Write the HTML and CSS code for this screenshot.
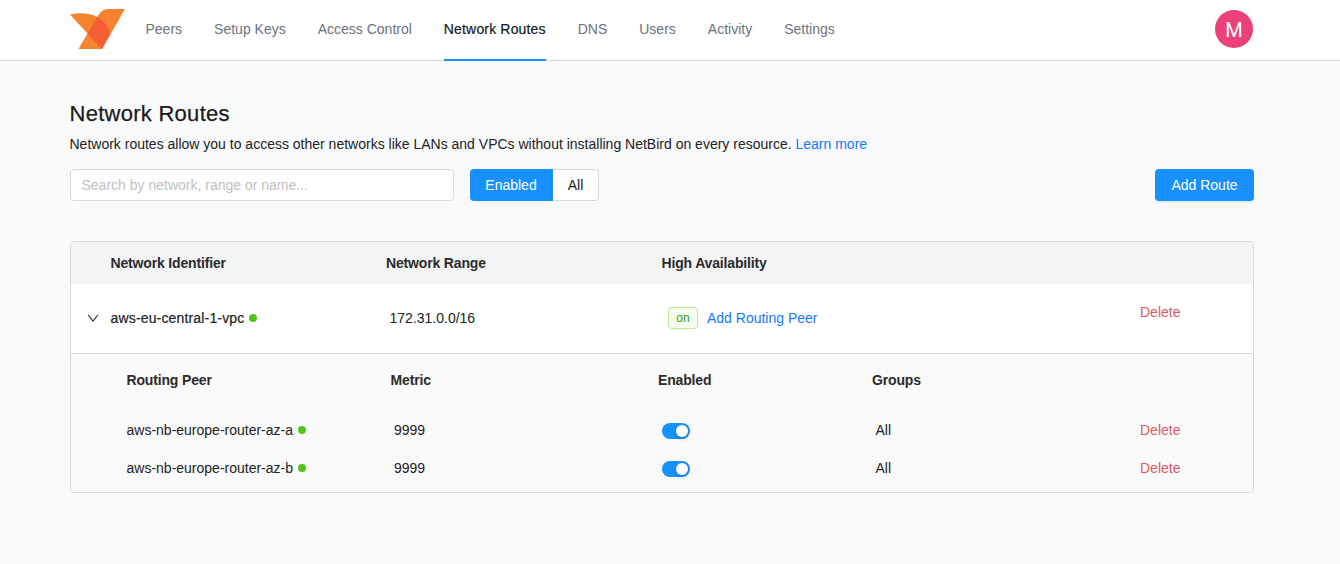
FILE: index.html
```html
<!DOCTYPE html>
<html lang="en">
<head>
<meta charset="utf-8">
<title>Network Routes</title>
<link rel="stylesheet" href="styles.css">
</head>
<body>
<header class="topbar">
  <svg class="logo" viewBox="0 0 55 40" width="55" height="40" aria-label="NetBird">
    <path fill="#f68330" d="M0 5.600C10 3.200 20 4 27.300 8C31 1.600 34 0 40 0H55L32 40H8.500L17.500 24.500Z"/>
    <path fill="#f35e32" d="M27.300 8C34 11 38.500 17.500 40 25.500L32 40L17.500 24.500Z"/>
  </svg>
  <nav class="menu">
    <a>Peers</a><a>Setup Keys</a><a>Access Control</a><a class="active medium">Network Routes</a><a>DNS</a><a>Users</a><a>Activity</a><a>Settings</a>
  </nav>
  <div class="avatar">M</div>
</header>
<main class="page">
  <h1>Network Routes</h1>
  <p class="intro">Network routes allow you to access other networks like LANs and VPCs without installing NetBird on every resource. <a class="link">Learn more</a></p>
  <div class="toolbar">
    <input class="search" placeholder="Search by network, range or name...">
    <div class="filter"><span class="selected">Enabled</span><span class="option">All</span></div>
    <button class="add">Add Route</button>
  </div>
  <section class="card">
    <div class="routes head"><span></span><span>Network Identifier</span><span>Network Range</span><span>High Availability</span><span></span></div>
    <div class="routes row">
      <svg class="chevron" width="12" height="12" viewBox="0 0 12 12"><path d="M1.200 3L6 9L10.800 3" fill="none" stroke="#262626" stroke-width="1.100"/></svg>
      <span class="name"><span class="medium">aws-eu-central-1-vpc</span><i class="dot"></i></span>
      <span class="range">172.31.0.0/16</span>
      <span class="availability"><b class="tag">on</b><a class="link">Add Routing Peer</a></span>
      <a class="delete">Delete</a>
    </div>
    <div class="peers">
      <div class="peer peer-head"><span>Routing Peer</span><span>Metric</span><span>Enabled</span><span>Groups</span><span></span></div>
      <div class="peer"><span class="name">aws-nb-europe-router-az-a<i class="dot"></i></span><span class="value">9999</span><span class="value"><i class="switch"></i></span><span class="value">All</span><a class="delete">Delete</a></div>
      <div class="peer"><span class="name">aws-nb-europe-router-az-b<i class="dot"></i></span><span class="value">9999</span><span class="value"><i class="switch"></i></span><span class="value">All</span><a class="delete">Delete</a></div>
    </div>
  </section>
</main>
</body>
</html>
```
FILE: styles.css
```css
* { box-sizing: border-box; }
body {
  margin: 0;
  height: 564px;
  background: #f9fafc;
  color: #222;
  font: 14px/22px "Liberation Sans", Arial, sans-serif;
}
.topbar {
  display: flex;
  height: 61px;
  padding: 0 87px 0 70px;
  background: #fff;
  border-bottom: 1px solid #d9d9d9;
}
.logo { margin-top: 9px; }
.menu {
  display: flex;
  gap: 32px;
  margin-left: 20.500px;
  height: 61px;
  color: #6b7280;
  line-height: 58px;
}
.medium { letter-spacing: 0.160px; -webkit-text-stroke: 0.200px currentColor; }
.active { color: #111827; border-bottom: 2px solid #1890ff; }
.avatar {
  width: 38px;
  height: 38px;
  margin: 10px 0 0 auto;
  border-radius: 50%;
  background: #ec407a;
  color: #fff;
  font: 20px/40px Roboto, sans-serif;
  text-align: center;
}
.page { padding: 38px 86px 0 70px; }
h1 {
  margin: 0 0 4px -0.500px;
  font-size: 22px;
  font-weight: 400;
  line-height: 30px;
  letter-spacing: 0.270px;
  color: #1a1a1a;
  -webkit-text-stroke: 0.250px currentColor;
}
.intro { margin: 0 0 14px -0.500px; }
.link { color: #1677ff; }
.toolbar { display: flex; height: 32px; }
.search {
  width: 384px;
  padding: 0 10.500px;
  border: 1px solid #d9d9d9;
  border-radius: 4px;
  background: #fff;
  font: inherit;
}
.search::placeholder { color: #bfbfbf; }
.filter { display: flex; margin-left: 16px; line-height: 32px; }
.selected {
  width: 83px;
  padding-right: 1px;
  background: #1890ff;
  color: #fff;
  text-align: center;
  border-radius: 4px 0 0 4px;
}
.option {
  width: 46px;
  line-height: 30px;
  background: #fff;
  border: 1px solid #d9d9d9;
  border-left: 0;
  border-radius: 0 4px 4px 0;
  text-align: center;
}
.add {
  width: 99px;
  margin-left: auto;
  padding: 0;
  border: 0;
  border-radius: 4px;
  background: #1890ff;
  box-shadow: 0 2px 0 #e1f2fc;
  color: #fff;
  font: inherit;
}
.card {
  margin-top: 40px;
  height: 252px;
  border: 1px solid #d9d9d9;
  border-radius: 4px;
  background: #fff;
  overflow: hidden;
}
.routes {
  display: grid;
  grid-template-columns: 39.500px 275.500px 275.500px 478.500px 1fr;
  align-items: center;
}
.head, .peer-head { font-weight: 700; letter-spacing: -0.160px; color: #2b2b2b; }
.head { height: 42px; background: #f3f4f6; }
.row { height: 69px; padding-bottom: 1px; }
.chevron { margin-left: 16px; }
.name { display: flex; align-items: center; }
.dot { width: 8px; height: 8px; margin-left: 5px; border-radius: 50%; background: #52c41a; }
.range { padding-left: 3.500px; }
.availability { display: flex; align-items: center; padding-left: 6.500px; }
.tag {
  width: 30px;
  height: 22px;
  margin-right: 9px;
  border: 1px solid #b7eb8f;
  border-radius: 4px;
  background: #f6ffed;
  color: #389e0d;
  font-size: 12px;
  font-weight: 400;
  line-height: 20px;
  text-align: center;
}
.delete { color: #d85b63; }
.row .delete { padding-bottom: 12px; }
.peers { height: 139px; padding: 7px 0 0 55.500px; border-top: 1px solid #d9d9d9; background: #fafafa; }
.peer {
  display: grid;
  grid-template-columns: 264px 267.500px 214px 268px 1fr;
  align-items: center;
  height: 38px;
}
.peer-head { margin-bottom: 12px; }
.value { padding-left: 3.500px; }
.switch {
  display: flex;
  justify-content: flex-end;
  align-items: center;
  width: 28px;
  height: 16px;
  margin-top: 2px;
  padding-right: 2px;
  border-radius: 8px;
  background: #1890ff;
}
.switch::after {
  content: "";
  width: 12px;
  height: 12px;
  border-radius: 50%;
  background: #fff;
  box-shadow: 0 2px 4px rgba(0, 35, 11, 0.2);
}
```
